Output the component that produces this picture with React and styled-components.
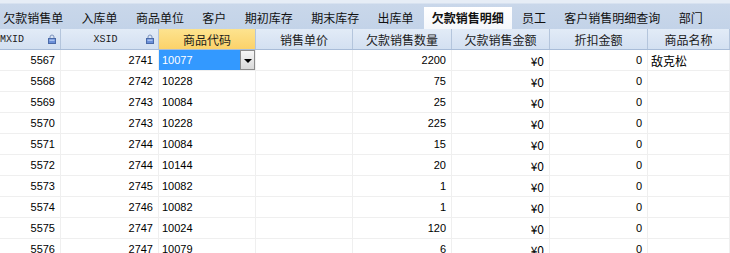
import React from 'react';
import styled, { createGlobalStyle } from 'styled-components';

const GlobalStyle = createGlobalStyle`
  html, body {
    margin: 0;
    padding: 0;
    background: #ffffff;
  }
  body {
    font-family: "Noto Sans CJK SC", "Liberation Sans", sans-serif;
    font-size: 12px;
    color: #000;
  }
`;

const tabs = [
  '欠款销售单', '入库单', '商品单位', '客户', '期初库存', '期末库存',
  '出库单', '欠款销售明细', '员工', '客户销售明细查询', '部门',
];
const activeTab = '欠款销售明细';

const columns = [
  { key: 'mxid', title: 'MXID', width: 61, locked: true, latin: true, left: true },
  { key: 'xsid', title: 'XSID', width: 98, locked: true, latin: true },
  { key: 'code', title: '商品代码', width: 97, active: true },
  { key: 'price', title: '销售单价', width: 97 },
  { key: 'qty', title: '欠款销售数量', width: 99 },
  { key: 'amount', title: '欠款销售金额', width: 98 },
  { key: 'discount', title: '折扣金额', width: 98 },
  { key: 'name', title: '商品名称', width: null },
];

const rows = [
  ['5567', '2741', '10077', '', '2200', '0', '敌克松'],
  ['5568', '2742', '10228', '', '75', '0', ''],
  ['5569', '2743', '10084', '', '25', '0', ''],
  ['5570', '2743', '10228', '', '225', '0', ''],
  ['5571', '2744', '10084', '', '15', '0', ''],
  ['5572', '2744', '10144', '', '20', '0', ''],
  ['5573', '2745', '10082', '', '1', '0', ''],
  ['5574', '2746', '10082', '', '1', '0', ''],
  ['5575', '2747', '10024', '', '120', '0', ''],
  ['5576', '2747', '10079', '', '6', '0', ''],
];

const gridTemplate = columns.map(c => (c.width ? `${c.width}px` : '1fr')).join(' ');

const Window = styled.div`
  width: 730px;
  height: 253px;
  overflow: hidden;
  display: flex;
  flex-direction: column;
  background: #fff;
`;

const TabBar = styled.div`
  height: 29px;
  flex: none;
  display: flex;
  align-items: flex-end;
  background: linear-gradient(#e6edf6 0, #e6edf6 3px, #c9d7ea 4px, #c3d3e8 100%);
  overflow: hidden;
`;

const TabStrip = styled.div`
  display: flex;
  margin-left: -6px;
  height: 22px;
`;

const Tab = styled.div`
  display: flex;
  align-items: center;
  padding: 0 ${p => (p.$active ? 8 : 9.2)}px;
  margin: 0 ${p => (p.$active ? 1 : 0)}px;
  white-space: nowrap;
  font-size: 12px;
  line-height: 22px;
  color: #111;
  font-weight: ${p => (p.$active ? 700 : 400)};
  background: ${p => (p.$active ? 'linear-gradient(#ffffff, #f4f7fb)' : 'transparent')};
`;

const HeaderRow = styled.div`
  display: grid;
  grid-template-columns: ${gridTemplate};
  height: 20px;
  flex: none;
  background: linear-gradient(#e2ebf7, #d3e0f1);
  border-bottom: 1px solid #a8bcd8;
`;

const HeaderCell = styled.div`
  display: flex;
  align-items: center;
  padding: 0 4px 0 ${p => (p.$left ? 0 : 4)}px;
  border-right: 1px solid #b4c5dc;
  background: ${p => (p.$active ? 'linear-gradient(#fde38f, #fbd26a)' : 'transparent')};
  overflow: hidden;
  white-space: nowrap;
`;

const HeaderLabel = styled.span`
  flex: 1;
  text-align: ${p => (p.$left ? 'left' : 'center')};
  font-family: ${p => (p.$latin ? '"Liberation Mono", monospace' : '"Noto Sans CJK SC", sans-serif')};
  font-size: ${p => (p.$latin ? 10 : 12)}px;
  color: #1a1a1a;
`;

const LockIcon = () => (
  <svg width="8" height="10" viewBox="0 0 8 10">
    <path d="M2 4.5V3a2 2 0 0 1 4 0v1.5" fill="none" stroke="#7c93bd" strokeWidth="1" />
    <rect x="0.5" y="4.5" width="7" height="5" fill="#6a8fd8" stroke="#4a6aa8" strokeWidth="1" />
    <rect x="1.5" y="5.5" width="5" height="1.5" fill="#a9c2f0" />
  </svg>
);

const Body = styled.div`
  display: flex;
  flex-direction: column;
`;

const Row = styled.div`
  display: grid;
  grid-template-columns: ${gridTemplate};
  height: 20px;
  flex: none;
  border-bottom: 1px solid #efefef;
`;

const Cell = styled.div`
  display: flex;
  align-items: center;
  justify-content: ${p => (p.$align === 'right' ? 'flex-end' : 'flex-start')};
  padding: 0 ${p => (p.$align === 'right' ? 5 : 3)}px;
  border-right: 1px solid #efefef;
  font-family: "Liberation Sans", "Noto Sans CJK SC", sans-serif;
  font-size: 11px;
  white-space: nowrap;
  overflow: hidden;
`;

const SelectedCell = styled.div`
  display: flex;
  align-items: stretch;
  background: #3399ff;
  color: #fff;
  border-right: 1px solid #efefef;
  font-family: "Liberation Sans", sans-serif;
  font-size: 11px;
`;

const SelectedText = styled.span`
  flex: 1;
  display: flex;
  align-items: center;
  padding-left: 3px;
`;

const DropButton = styled.div`
  width: 15px;
  display: flex;
  align-items: center;
  justify-content: center;
  background: linear-gradient(#f6f6f6, #d9d9d9);
  border: 1px solid #8c8c8c;
  box-sizing: border-box;
`;

const Arrow = styled.span`
  width: 0;
  height: 0;
  border-left: 4px solid transparent;
  border-right: 4px solid transparent;
  border-top: 4px solid #000;
  margin-top: 1px;
`;

const Money = styled.span`
  font-family: "Noto Sans CJK SC", sans-serif;
  font-size: 12px;
`;

const NameText = styled.span`
  font-family: "Noto Sans CJK SC", sans-serif;
  font-size: 12px;
`;

export default function App() {
  return (
    <>
      <GlobalStyle />
      <Window>
        <TabBar>
          <TabStrip>
            {tabs.map(t => (
              <Tab key={t} $active={t === activeTab}>{t}</Tab>
            ))}
          </TabStrip>
        </TabBar>
        <HeaderRow>
          {columns.map(c => (
            <HeaderCell key={c.key} $active={c.active} $left={c.left}>
              <HeaderLabel $latin={c.latin} $left={c.left}>{c.title}</HeaderLabel>
              {c.locked && <LockIcon />}
            </HeaderCell>
          ))}
        </HeaderRow>
        <Body>
          {rows.map((r, i) => (
            <Row key={r[0]}>
              <Cell $align="right">{r[0]}</Cell>
              <Cell $align="right">{r[1]}</Cell>
              {i === 0 ? (
                <SelectedCell>
                  <SelectedText>{r[2]}</SelectedText>
                  <DropButton><Arrow /></DropButton>
                </SelectedCell>
              ) : (
                <Cell>{r[2]}</Cell>
              )}
              <Cell $align="right">{r[3]}</Cell>
              <Cell $align="right">{r[4]}</Cell>
              <Cell $align="right"><Money>¥{r[5]}</Money></Cell>
              <Cell $align="right">0</Cell>
              <Cell>{r[6] && <NameText>{r[6]}</NameText>}</Cell>
            </Row>
          ))}
        </Body>
      </Window>
    </>
  );
}
